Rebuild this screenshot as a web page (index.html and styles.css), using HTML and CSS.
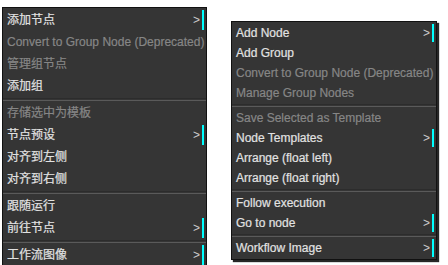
FILE: index.html
```html
<!DOCTYPE html>
<html lang="en">
<head>
    <meta charset="UTF-8">
    <meta name="viewport" content="width=device-width, initial-scale=1.0">
    <title>Context Menus</title>
    <link rel="stylesheet" href="styles.css">
</head>
<body>
    <div class="page">
        <div class="context-menu menu-zh">
            <div class="menu-entry has-submenu">添加节点</div>
            <div class="menu-entry disabled">Convert to Group Node (Deprecated)</div>
            <div class="menu-entry disabled">管理组节点</div>
            <div class="menu-entry">添加组</div>
            <div class="separator"></div>
            <div class="menu-entry disabled">存储选中为模板</div>
            <div class="menu-entry has-submenu">节点预设</div>
            <div class="menu-entry">对齐到左侧</div>
            <div class="menu-entry">对齐到右侧</div>
            <div class="separator"></div>
            <div class="menu-entry">跟随运行</div>
            <div class="menu-entry has-submenu">前往节点</div>
            <div class="separator"></div>
            <div class="menu-entry has-submenu">工作流图像</div>
        </div>

        <div class="context-menu menu-en">
            <div class="menu-entry has-submenu">Add Node</div>
            <div class="menu-entry">Add Group</div>
            <div class="menu-entry disabled">Convert to Group Node (Deprecated)</div>
            <div class="menu-entry disabled">Manage Group Nodes</div>
            <div class="separator"></div>
            <div class="menu-entry disabled">Save Selected as Template</div>
            <div class="menu-entry has-submenu">Node Templates</div>
            <div class="menu-entry">Arrange (float left)</div>
            <div class="menu-entry">Arrange (float right)</div>
            <div class="separator"></div>
            <div class="menu-entry">Follow execution</div>
            <div class="menu-entry has-submenu">Go to node</div>
            <div class="separator"></div>
            <div class="menu-entry has-submenu">Workflow Image</div>
        </div>
    </div>
</body>
</html>
```

FILE: styles.css
```css
body {
    margin: 0;
    background-color: #fff;
    font-family: "Liberation Sans", "Noto Sans CJK SC", sans-serif;
    font-size: 12px;
    overflow: hidden;
}
.page {
    display: flex;
    align-items: flex-start;
}
.context-menu {
    background-color: #353535;
    border: 1px solid #111;
    color: #e2e2e2;
}
.menu-zh {
    width: 203px;
    margin: 7px 0 0 2px;
    line-height: 16px;
    height: 260px;
}
.menu-en {
    width: 204px;
    margin: 21px 0 0 24px;
    line-height: 14px;
    box-shadow: 2px 2px 1px rgba(0, 0, 0, 0.85);
}
.menu-entry {
    position: relative;
    margin: 2px;
    padding: 2px;
    white-space: nowrap;
    -webkit-text-stroke: 0.2px;
}
.menu-entry.disabled {
    color: #868686;
}
.menu-entry.has-submenu {
    border-right: 2px solid #0ff;
}
.menu-entry.has-submenu::after {
    content: ">";
    position: absolute;
    top: 2px;
    right: 2px;
    color: #ccc;
    -webkit-text-stroke: 0;
}
.separator {
    height: 1px;
    border-top: 1px solid #2c2c2c;
    border-bottom: 1px solid #5a5a5a;
}
```
